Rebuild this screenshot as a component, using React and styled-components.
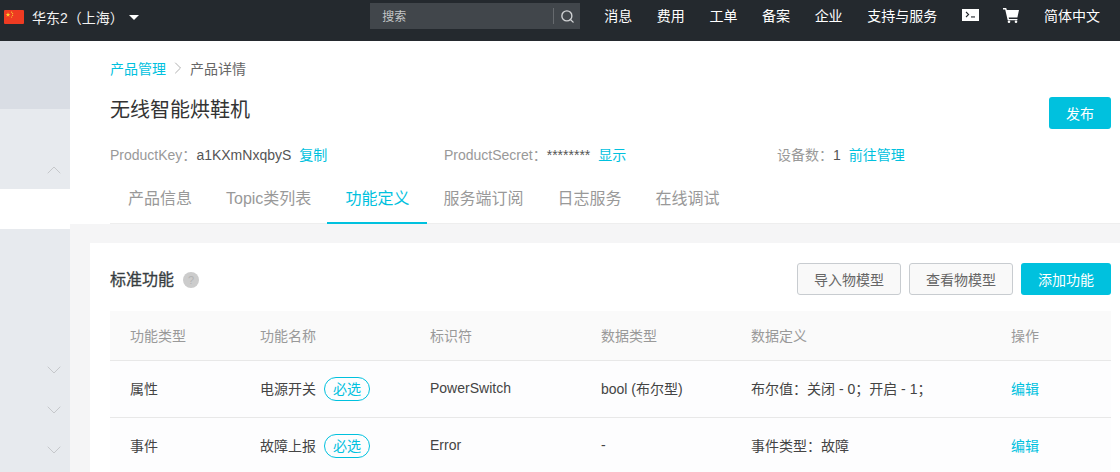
import React from "react";
import styled, { createGlobalStyle } from "styled-components";
import { ChevronUp, ChevronDown, ChevronRight, Search } from "lucide-react";

const FONT = `"Liberation Sans", "Noto Sans CJK SC", sans-serif`;
const BRAND = "#00c1de";

const navItems = ["消息", "费用", "工单", "备案", "企业", "支持与服务"];
const tabs = ["产品信息", "Topic类列表", "功能定义", "服务端订阅", "日志服务", "在线调试"];
const columns = ["功能类型", "功能名称", "标识符", "数据类型", "数据定义", "操作"];
const rows = [
  { type: "属性", name: "电源开关", id: "PowerSwitch", dataType: "bool (布尔型)", def: "布尔值：关闭 - 0；开启 - 1；" },
  { type: "事件", name: "故障上报", id: "Error", dataType: "-", def: "事件类型：故障" },
];

const Flag = () => (
  <svg width="20" height="14" viewBox="0 0 20 14">
    <rect width="20" height="14" rx="1" fill="#ee3b22" />
    <path d="M4 2.2l.6 1.7h1.8l-1.5 1.1.6 1.8L4 5.7 2.5 6.8l.6-1.8-1.5-1.1h1.8z" fill="#f8d12f" />
    <circle cx="7.6" cy="2.2" r=".6" fill="#f8d12f" />
    <circle cx="8.6" cy="3.7" r=".6" fill="#f8d12f" />
    <circle cx="8.6" cy="5.5" r=".6" fill="#f8d12f" />
    <circle cx="7.6" cy="7" r=".6" fill="#f8d12f" />
  </svg>
);

const TerminalIcon = () => (
  <svg width="17" height="12" viewBox="0 0 17 12">
    <rect width="17" height="12" fill="#fff" />
    <path d="M4 3l2.6 2.5L4 8" fill="none" stroke="#24292e" strokeWidth="1.1" />
    <rect x="9" y="7.4" width="4" height="1.1" fill="#24292e" />
  </svg>
);

const CartIcon = () => (
  <svg width="16" height="15" viewBox="0 0 16 15" fill="#fff">
    <path d="M0 0h3.2l.6 2H16l-1.6 7.4H5.7l.3 1.5h8.4v1.4H4.7L2.2 1.4H0z" />
    <circle cx="6" cy="13.7" r="1.3" />
    <circle cx="13" cy="13.7" r="1.3" />
  </svg>
);

const App = () => (
  <>
    <GlobalStyle />
    <Page>
      <TopBar>
        <Region>
          <Flag />
          <RegionName>华东2（上海）</RegionName>
          <Caret />
        </Region>
        <TopRight>
          <SearchBox>
            <SearchHint>搜索</SearchHint>
            <SearchButton>
              <Search size={15} strokeWidth={2.2} />
            </SearchButton>
          </SearchBox>
          <Nav>
            {navItems.map((item) => (
              <NavItem key={item}>{item}</NavItem>
            ))}
            <NavIcon>
              <TerminalIcon />
            </NavIcon>
            <NavIcon>
              <CartIcon />
            </NavIcon>
            <NavItem>简体中文</NavItem>
          </Nav>
        </TopRight>
      </TopBar>
      <Body>
        <Sidebar>
          <SideHead />
          <SideRow />
          <SideRow>
            <ChevronUp size={24} strokeWidth={1} />
          </SideRow>
          <SideRow $active />
          <SideRow />
          <SideRow />
          <SideRow />
          <SideRow>
            <ChevronDown size={24} strokeWidth={1} />
          </SideRow>
          <SideRow>
            <ChevronDown size={24} strokeWidth={1} />
          </SideRow>
          <SideRow>
            <ChevronDown size={24} strokeWidth={1} />
          </SideRow>
        </Sidebar>
        <Main>
          <Header>
            <Breadcrumb>
              <Link>产品管理</Link>
              <ChevronRight size={20} strokeWidth={1.1} color="#aaa" />
              <span>产品详情</span>
            </Breadcrumb>
            <TitleRow>
              <Title>无线智能烘鞋机</Title>
              <PublishButton>发布</PublishButton>
            </TitleRow>
            <MetaRow>
              <Meta>
                <MetaLabel>ProductKey：</MetaLabel>a1KXmNxqbyS<MetaLink>复制</MetaLink>
              </Meta>
              <Meta>
                <MetaLabel>ProductSecret：</MetaLabel>********<MetaLink>显示</MetaLink>
              </Meta>
              <Meta>
                <MetaLabel>设备数：</MetaLabel>1<MetaLink>前往管理</MetaLink>
              </Meta>
            </MetaRow>
            <Tabs>
              {tabs.map((tab) => (
                <Tab key={tab} $active={tab === "功能定义"}>
                  {tab}
                </Tab>
              ))}
            </Tabs>
          </Header>
          <Content>
            <Card>
              <CardHead>
                <CardTitle>
                  标准功能
                  <HelpDot>?</HelpDot>
                </CardTitle>
                <Actions>
                  <GhostButton>导入物模型</GhostButton>
                  <GhostButton>查看物模型</GhostButton>
                  <PrimaryButton>添加功能</PrimaryButton>
                </Actions>
              </CardHead>
              <HeadRow>
                {columns.map((col) => (
                  <HeadCell key={col}>{col}</HeadCell>
                ))}
              </HeadRow>
              {rows.map((row) => (
                <Row key={row.name}>
                  <Cell>{row.type}</Cell>
                  <Cell>
                    {row.name}
                    <Required>必选</Required>
                  </Cell>
                  <Cell>{row.id}</Cell>
                  <Cell>{row.dataType}</Cell>
                  <Cell>{row.def}</Cell>
                  <Cell>
                    <Link>编辑</Link>
                  </Cell>
                </Row>
              ))}
            </Card>
          </Content>
        </Main>
      </Body>
    </Page>
  </>
);

export default App;

const GlobalStyle = createGlobalStyle`
  html, body {
    margin: 0;
    padding: 0;
    height: 100%;
    overflow: hidden;
    font-family: ${FONT};
  }
`;

const Page = styled.div`
  width: 1120px;
  height: 472px;
  overflow: hidden;
  display: flex;
  flex-direction: column;
`;

const TopBar = styled.div`
  height: 41px;
  flex: none;
  background: #24292e;
  display: flex;
  justify-content: space-between;
  color: #fff;
  font-size: 14px;
`;

const Region = styled.div`
  display: flex;
  align-items: center;
  height: 34px;
  padding-left: 4px;
`;

const RegionName = styled.span`
  margin-left: 8px;
  color: #f2f2f2;
`;

const Caret = styled.span`
  width: 0;
  height: 0;
  margin-left: 5px;
  border-left: 5px solid transparent;
  border-right: 5px solid transparent;
  border-top: 5px solid #fff;
`;

const TopRight = styled.div`
  display: flex;
  height: 32px;
  padding-right: 20px;
`;

const SearchBox = styled.div`
  width: 210px;
  height: 26px;
  margin-top: 3px;
  background: #41464b;
  display: flex;
  align-items: center;
  justify-content: space-between;
`;

const SearchHint = styled.span`
  margin: 0 0 2px 12px;
  font-size: 12px;
  color: #c4c6c8;
`;

const SearchButton = styled.span`
  width: 26px;
  height: 16px;
  border-left: 1px solid #666a6e;
  display: flex;
  align-items: center;
  justify-content: center;
  color: #d0d2d4;
`;

const Nav = styled.nav`
  display: flex;
  align-items: center;
  gap: 24.6px;
  margin-left: 24px;
  padding-bottom: 2px;
`;

const NavItem = styled.span`
  font-size: 14px;
  white-space: nowrap;
`;

const NavIcon = styled.span`
  display: flex;
  align-items: center;
  height: 17px;
`;

const Body = styled.div`
  flex: 1;
  display: flex;
  min-height: 0;
`;

const Sidebar = styled.aside`
  width: 70px;
  flex: none;
  background: #e7eaee;
`;

const SideHead = styled.div`
  height: 68px;
  background: #d9dde4;
`;

const SideRow = styled.div`
  height: 40px;
  box-sizing: border-box;
  display: flex;
  align-items: center;
  justify-content: flex-end;
  padding: 2px 4px 0 0;
  color: #c6c8cb;
  background: ${(p) => (p.$active ? "#fff" : "transparent")};
`;

const Main = styled.main`
  flex: 1;
  min-width: 0;
  background: #f5f5f6;
`;

const Header = styled.div`
  background: #fff;
  padding: 19px 0 0 40px;
`;

const Breadcrumb = styled.div`
  display: flex;
  align-items: center;
  gap: 2px;
  height: 16px;
  font-size: 14px;
  color: #666;
`;

const Link = styled.a`
  color: ${BRAND};
  font-size: 14px;
`;

const TitleRow = styled.div`
  display: flex;
  align-items: center;
  justify-content: space-between;
  height: 34px;
  margin-top: 20px;
  padding-right: 9px;
`;

const Title = styled.h1`
  margin: 0;
  padding-bottom: 10px;
  font-size: 20px;
  font-weight: 400;
  color: #333;
`;

const PublishButton = styled.button`
  width: 62px;
  height: 32px;
  border: none;
  border-radius: 3px;
  background: ${BRAND};
  color: #fff;
  font: 14px ${FONT};
`;

const MetaRow = styled.div`
  display: grid;
  grid-template-columns: 334px 333px 1fr;
  height: 18px;
  margin-top: 14px;
  align-items: center;
  font-size: 14px;
  color: #555;
`;

const Meta = styled.div`
  white-space: nowrap;
`;

const MetaLabel = styled.span`
  color: #999;
`;

const MetaLink = styled.a`
  margin-left: 8px;
  color: ${BRAND};
`;

const Tabs = styled.div`
  display: flex;
  height: 50px;
  margin-top: 12px;
  padding-left: 1px;
  border-bottom: 1px solid #eee;
  box-sizing: border-box;
`;

const Tab = styled.div`
  padding: 0 ${(p) => (p.$active ? 18 : 17)}px;
  margin: ${(p) => (p.$active ? "0 -1px -1px" : "0 0 -1px")};
  height: 50px;
  box-sizing: border-box;
  font-size: 16px;
  line-height: 50px;
  color: ${(p) => (p.$active ? BRAND : "#999")};
  border-bottom: 2px solid ${(p) => (p.$active ? BRAND : "transparent")};
`;

const Content = styled.div`
  padding: 19px 0 0 20px;
`;

const Card = styled.section`
  background: #fff;
  padding: 0 9px 0 20px;
`;

const CardHead = styled.div`
  height: 68px;
  display: flex;
  align-items: center;
  justify-content: space-between;
  padding-top: 4px;
  box-sizing: border-box;
`;

const CardTitle = styled.h2`
  margin: 0;
  padding-bottom: 2px;
  display: flex;
  align-items: center;
  font-size: 16px;
  font-weight: 400;
  color: #373d41;
  -webkit-text-stroke: 0.3px #373d41;
`;

const HelpDot = styled.span`
  width: 16px;
  height: 16px;
  margin: 4px 0 0 9px;
  border-radius: 50%;
  background: #ccc;
  color: #b4b4b4;
  font-size: 11px;
  line-height: 16px;
  text-align: center;
  -webkit-text-stroke: 0;
`;

const Actions = styled.div`
  display: flex;
  gap: 8px;
`;

const GhostButton = styled.button`
  width: 104px;
  height: 32px;
  border: 1px solid #c8ccd0;
  border-radius: 3px;
  background: #f9f9f9;
  color: #666;
  font: 14px ${FONT};
`;

const PrimaryButton = styled.button`
  width: 90px;
  height: 32px;
  border: none;
  border-radius: 3px;
  background: ${BRAND};
  color: #fff;
  font: 14px ${FONT};
`;

const GRID = "130px 170px 171px 150px 260px 120px";

const HeadRow = styled.div`
  display: grid;
  grid-template-columns: ${GRID};
  height: 50px;
  align-items: center;
  box-sizing: border-box;
  background: #fafafa;
  border-bottom: 1px solid #e8e8e8;
`;

const HeadCell = styled.div`
  padding: 0 0 2px 20px;
  font-size: 14px;
  color: #999;
`;

const Row = styled.div`
  display: grid;
  grid-template-columns: ${GRID};
  height: 57px;
  align-items: center;
  box-sizing: border-box;
  background: #fdfdfe;
  border-bottom: 1px solid #e8e8e8;
`;

const Cell = styled.div`
  display: flex;
  align-items: center;
  padding: 0 0 2px 20px;
  font-size: 14px;
  color: #444;
  white-space: nowrap;
`;

const Required = styled.span`
  margin: 2px 0 0 8px;
  width: 46px;
  height: 24px;
  box-sizing: border-box;
  border: 1px solid ${BRAND};
  border-radius: 12px;
  color: ${BRAND};
  font-size: 14px;
  line-height: 22px;
  text-align: center;
`;
